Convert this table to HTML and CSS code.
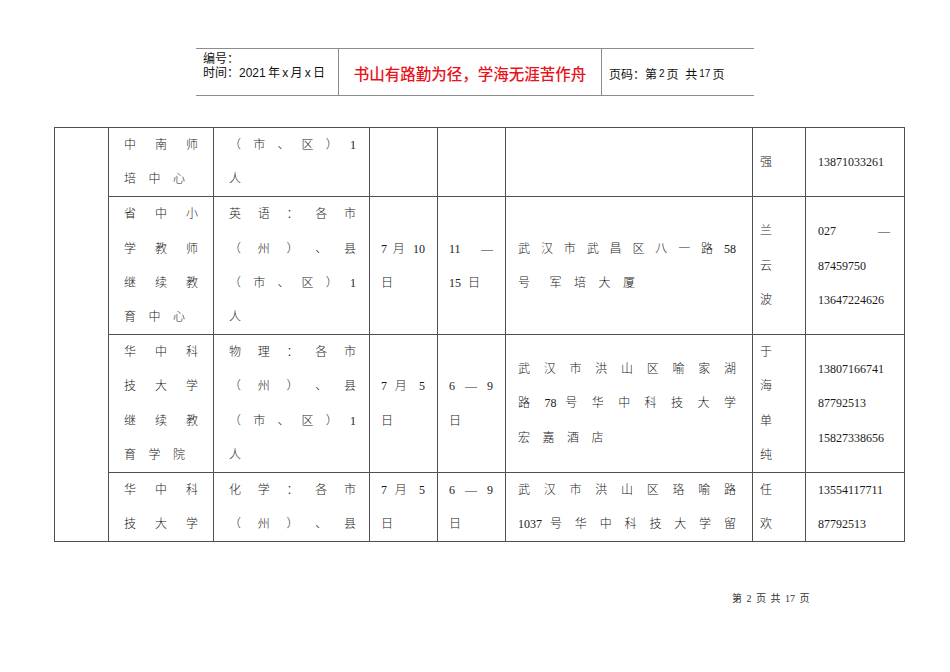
FILE: index.html
```html
<!DOCTYPE html>
<html lang="zh-CN">
<head>
<meta charset="utf-8">
<title>第2页</title>
<link rel="stylesheet" href="styles.css">
</head>
<body>
<div class="page">
  <header class="doc-head">
    <div class="head-left">
      <div>编号：</div>
      <div>时间：2021<span class="thin"> </span>年<span class="thin"> </span>x<span class="thin"> </span>月<span class="thin"> </span>x<span class="thin"> </span>日</div>
    </div>
    <div class="head-mid">书山有路勤为径，学海无涯苦作舟</div>
    <div class="head-right">页码：第<span class="num">2</span>页&nbsp; 共<span class="num">17</span>页</div>
  </header>

  <table class="grid">
    <colgroup>
      <col class="c1"><col class="c2"><col class="c3"><col class="c4"><col class="c5"><col class="c6"><col class="c7"><col class="c8">
    </colgroup>
    <tr>
      <td class="first" rowspan="4"></td>
      <td class="org"><div class="j">中 南 师</div><div class="sp">培中心</div></td>
      <td class="quota"><div class="j">（ 市 、 区 ） 1</div><div>人</div></td>
      <td class="date"></td>
      <td class="date2"></td>
      <td class="addr"></td>
      <td class="who"><div>强</div></td>
      <td class="tel"><div>13871033261</div></td>
    </tr>
    <tr>
      <td class="org"><div class="j">省 中 小</div><div class="j">学 教 师</div><div class="j">继 续 教</div><div class="sp">育中心</div></td>
      <td class="quota"><div class="j">英 语 ： 各 市</div><div class="j">（ 州 ） 、 县</div><div class="j">（ 市 、 区 ） 1</div><div>人</div></td>
      <td class="date"><div class="j">7 月 10</div><div>日</div></td>
      <td class="date2"><div class="j">11 —</div><div class="ws">15 日</div></td>
      <td class="addr"><div class="j">武 汉 市 武 昌 区 八 一 路 58</div><div class="sp"><span class="hao">号</span>军培大厦</div></td>
      <td class="who"><div>兰</div><div>云</div><div>波</div></td>
      <td class="tel"><div class="j">027 —</div><div>87459750</div><div>13647224626</div></td>
    </tr>
    <tr>
      <td class="org"><div class="j">华 中 科</div><div class="j">技 大 学</div><div class="j">继 续 教</div><div class="sp">育学院</div></td>
      <td class="quota"><div class="j">物 理 ： 各 市</div><div class="j">（ 州 ） 、 县</div><div class="j">（ 市 、 区 ） 1</div><div>人</div></td>
      <td class="date"><div class="j">7 月 5</div><div>日</div></td>
      <td class="date2"><div class="j">6 — 9</div><div>日</div></td>
      <td class="addr"><div class="j">武 汉 市 洪 山 区 喻 家 湖</div><div class="j">路 78 号 华 中 科 技 大 学</div><div class="sp">宏嘉酒店</div></td>
      <td class="who"><div>于</div><div>海</div><div>单</div><div>纯</div></td>
      <td class="tel"><div>13807166741</div><div>87792513</div><div>15827338656</div></td>
    </tr>
    <tr>
      <td class="org"><div class="j">华 中 科</div><div class="j">技 大 学</div></td>
      <td class="quota"><div class="j">化 学 ： 各 市</div><div class="j">（ 州 ） 、 县</div></td>
      <td class="date"><div class="j">7 月 5</div><div>日</div></td>
      <td class="date2"><div class="j">6 — 9</div><div>日</div></td>
      <td class="addr"><div class="j">武 汉 市 洪 山 区 珞 喻 路</div><div class="j">1037 号 华 中 科 技 大 学 留</div></td>
      <td class="who"><div>任</div><div>欢</div></td>
      <td class="tel"><div>13554117711</div><div>87792513</div></td>
    </tr>
  </table>

  <footer class="doc-foot">第 2 页 共 17 页</footer>
</div>
</body>
</html>
```

FILE: styles.css
```css
html, body {
  margin: 0;
  padding: 0;
  background: #ffffff;
}

.page {
  width: 950px;
  height: 672px;
  overflow: hidden;
  padding-top: 48px;
  box-sizing: border-box;
}

.doc-head {
  display: flex;
  margin-left: 196px;
  width: 558px;
  height: 48px;
  border-top: 1px solid #8c8c8c;
  border-bottom: 1px solid #8c8c8c;
  box-sizing: border-box;
  font-family: "Liberation Sans", "Noto Sans CJK SC", sans-serif;
  color: #111;
}

.head-left {
  width: 143px;
  padding: 3px 0 0 7px;
  box-sizing: border-box;
  font-size: 12px;
  line-height: 14px;
  border-right: 1px solid #8c8c8c;
}

.head-left .thin {
  font-size: 8px;
}

.head-mid {
  width: 263px;
  display: flex;
  align-items: center;
  justify-content: center;
  padding-top: 2px;
  box-sizing: border-box;
  font-family: "Noto Sans CJK SC", sans-serif;
  font-size: 15.5px;
  font-weight: 500;
  color: #e8141b;
  border-right: 1px solid #8c8c8c;
}

.head-right {
  flex: 1;
  display: flex;
  align-items: center;
  padding: 2px 0 0 7px;
  font-size: 12px;
  white-space: pre;
}

.head-right .num {
  font-size: 10px;
  margin: 0 2px;
}

.grid {
  margin: 31px 0 0 54px;
  width: 851px;
  border-collapse: collapse;
  table-layout: fixed;
  font-family: "Liberation Serif", "Noto Sans CJK SC", serif;
  font-size: 12px;
  font-weight: 300;
  color: #1a1a1a;
}

.c1 { width: 54px; }
.c2 { width: 105px; }
.c3 { width: 156px; }
.c4 { width: 68px; }
.c5 { width: 68px; }
.c6 { width: 247px; }
.c7 { width: 53px; }
.c8 { width: 99px; }

.grid td {
  border: 1px solid #505050;
  vertical-align: middle;
  padding: 0;
  line-height: 34.2px;
  white-space: nowrap;
}

.grid td div {
  height: 34.2px;
}

.grid .org { padding: 0 15px 0 15px; }
.grid .quota { padding: 0 13px 0 15px; }
.grid .date { padding: 0 12px 0 11px; }
.grid .date2 { padding: 0 12px 0 11px; }
.grid .addr { padding: 0 16px 0 12px; }
.grid .who { padding: 0 6px 0 7px; }
.grid .tel { padding: 0 14px 0 12px; }

.j {
  text-align: justify;
  text-align-last: justify;
}

.sp {
  letter-spacing: 12.5px;
}

.ws {
  word-spacing: 4px;
}

.hao {
  margin-right: 7px;
}

.doc-foot {
  margin: 48px 0 0 732px;
  font-family: "Liberation Serif", "Noto Sans CJK SC", serif;
  font-size: 10px;
  word-spacing: 2px;
  color: #333;
}
```
